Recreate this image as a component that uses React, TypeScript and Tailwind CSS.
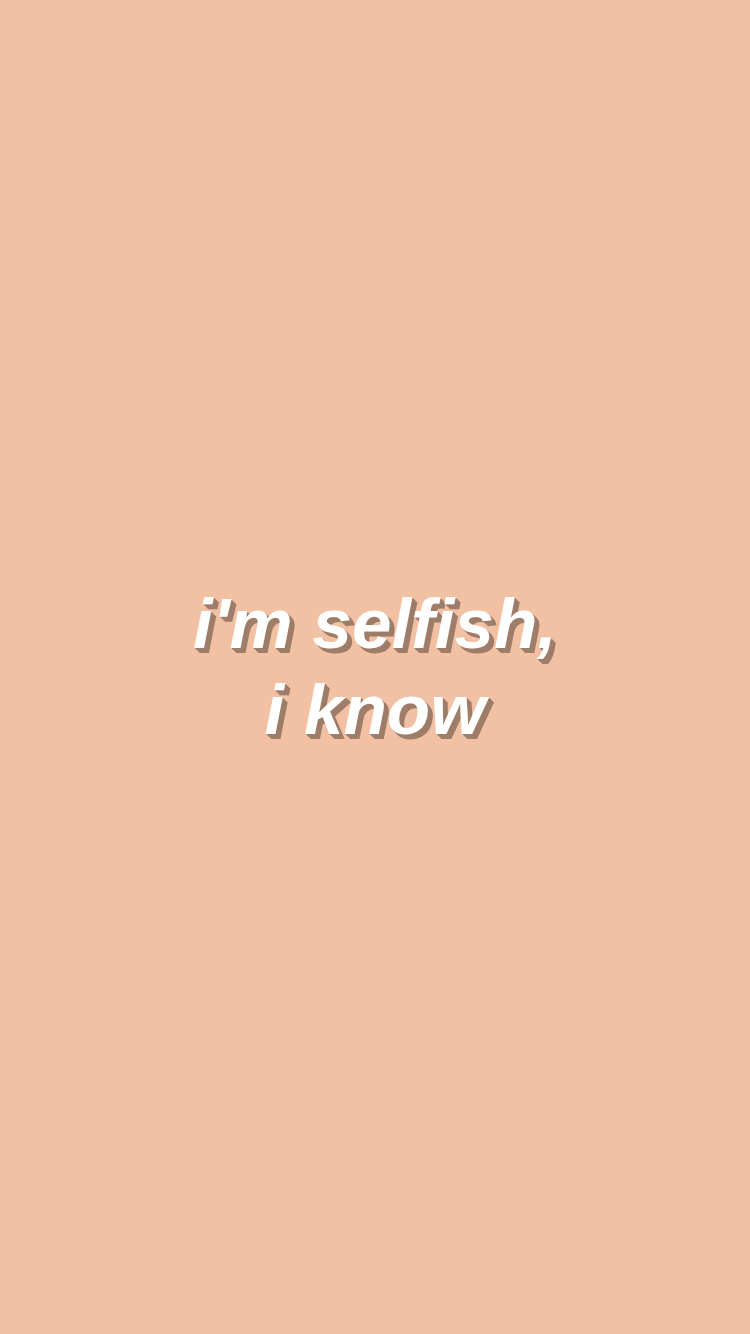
export default function App() {
  return (
    <div className="w-[750px] h-[1334px] bg-[#f2c0a2] flex flex-col items-center justify-center">
      <div
        className="text-white italic font-bold text-center text-[71px] leading-[86px] tracking-[0px] mt-[0px] [font-family:'Liberation_Sans',Arial,sans-serif] [text-shadow:1px_1px_0_#9e7d69,2px_2px_0_#9e7d69,3px_3px_0_#9e7d69,4px_4px_0_#9e7d69,5px_5px_0_#9e7d69]"
      >
        <div>i'm selfish,</div>
        <div>i know</div>
      </div>
    </div>
  );
}
